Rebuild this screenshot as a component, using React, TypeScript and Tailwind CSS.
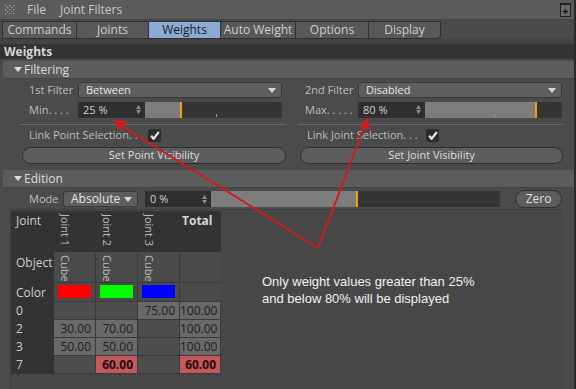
import React from "react";

const ui = "font-['Open_Sans',_'Noto_Sans',_sans-serif]";

function Grip() {
  const dots = [];
  for (let r = 0; r < 5; r++) {
    for (let c = 0; c < 5; c++) {
      if ((r + c) % 2 === 0) dots.push(<rect key={r + "-" + c} x={c * 2} y={r * 2} width="1.2" height="1.2" fill="#a8a8a8" />);
    }
  }
  return (
    <svg width="10" height="10" viewBox="0 0 10 10">
      {dots}
    </svg>
  );
}

function Dropdown({ text, className = "" }: { text: string; className?: string }) {
  return (
    <div className={"flex items-center justify-between h-[16px] rounded-[3px] bg-[#5e5e5e] border border-[#3a3a3a] pl-[7px] pr-[5px] text-[#e4e4e4] " + className}>
      <span>{text}</span>
      <svg width="8" height="5" viewBox="0 0 8 5">
        <path d="M0 0 L8 0 L4 5 Z" fill="#d8d8d8" />
      </svg>
    </div>
  );
}

function NumField({ value, w }: { value: string; w: string }) {
  return (
    <div className={"flex items-center justify-between h-[16px] bg-[#2f2f2f] pl-[5px] pr-[4px] text-[#cfcfcf] " + w}>
      <span>{value}</span>
      <svg width="5" height="9" viewBox="0 0 5 9">
        <path d="M0 4 L2.5 0 L5 4 Z M0 5 L2.5 9 L5 5 Z" fill="#8a8a8a" />
      </svg>
    </div>
  );
}

function Slider({ fill, tick, className = "" }: { fill: number; tick?: number; className?: string }) {
  return (
    <div className={"relative h-[16px] bg-[#353535] " + className}>
      <div className="h-full bg-[#7d7d7d]" style={{ width: fill + "px" }} />
      <div className="absolute top-0 h-full w-[2px] bg-[#f0a010]" style={{ left: fill + "px" }} />
      {tick !== undefined && <div className="absolute bottom-[1px] h-[3px] w-[1px] bg-[#d09020]" style={{ left: tick + "px" }} />}
    </div>
  );
}

function Check() {
  return (
    <div className="w-[13px] h-[13px] rounded-[2px] bg-[#2c2c2c] flex items-center justify-center">
      <svg width="10" height="9" viewBox="0 0 10 9">
        <path d="M1.2 4.8 L3.6 7.8 L8.8 1" stroke="#e8e8e8" strokeWidth="2.2" fill="none" />
      </svg>
    </div>
  );
}

function SectionHead({ title }: { title: string }) {
  return (
    <div className="flex items-center h-[18px] bg-[#5c5c5c] border-b border-[#444] pl-[11px] text-[#dcdcdc] text-[12px]">
      <svg width="8" height="5" viewBox="0 0 8 5" className="mr-[2px]">
        <path d="M0 0 L8 0 L4 5 Z" fill="#dcdcdc" />
      </svg>
      {title}
    </div>
  );
}

const tabs = ["Commands", "Joints", "Weights", "Auto Weight", "Options", "Display"];
const tabW = ["w-[75px]", "w-[73px]", "w-[73px]", "w-[76px]", "w-[74px]", "w-[73px]"];

const rows = [
  { label: "0", cells: ["", "", "75.00", "100.00"], red: [false, false, false, false] },
  { label: "2", cells: ["30.00", "70.00", "", "100.00"], red: [false, false, false, false] },
  { label: "3", cells: ["50.00", "50.00", "", "100.00"], red: [false, false, false, false] },
  { label: "7", cells: ["", "60.00", "", "60.00"], red: [false, true, false, true] },
];

export default function App() {
  return (
    <div className={"relative w-[576px] h-[389px] overflow-hidden bg-[#4b4b4b] text-[11px] " + ui}>
      {/* menu bar */}
      <div className="flex items-center h-[20px] bg-[#5b5b5b] border-b border-[#454545] pl-[5px] text-[#c8c8c8] text-[12px]">
        <Grip />
        <span className="ml-[12px]">File</span>
        <span className="ml-[14px]">Joint Filters</span>
        <div className="ml-auto mr-[5px] w-[11px] h-[14px] border border-[#222] border-t-2 bg-[#6a6a6a] flex items-center justify-center text-[#111] text-[11px] font-bold leading-none">
          +
        </div>
      </div>

      {/* tabs */}
      <div className="flex h-[19px] bg-[#4a4a4a] pl-[2px] pt-[1px]">
        {tabs.map((t, i) => (
          <div
            key={t}
            className={
              "flex items-center justify-center h-[18px] border border-[#2f2f2f] -ml-[1px] first:ml-0 text-[12px] " +
              tabW[i] +
              (t === "Weights" ? " bg-[#8cabd4] text-[#1e1e1e]" : " bg-[#585858] text-[#cdcdcd]") +
              (t === "Display" ? " rounded-br-[4px]" : "")
            }
          >
            {t}
          </div>
        ))}
      </div>
      <div className="h-[5px] bg-[#434343]" />

      {/* Weights header */}
      <div className="flex items-center h-[15px] bg-[#333] pl-[4px] text-[#d6d6d6] text-[12px] font-bold">Weights</div>
      <div className="h-[2px] bg-[#4b4b4b]" />

      <div className="ml-[3px]">
        <SectionHead title="Filtering" />
      </div>

      {/* filter grid */}
      <div className="grid grid-cols-[74px_204px_68px_204px] gap-x-[4px] gap-y-[3px] mt-[3px] items-center text-[#bdbdbd]">
        <div className="pl-[29px] whitespace-nowrap">1st Filter</div>
        <Dropdown text="Between" />
        <div className="pl-[19px] whitespace-nowrap">2nd Filter</div>
        <Dropdown text="Disabled" />

        <div className="pl-[29px] whitespace-nowrap">Min. . . .</div>
        <div className="flex">
          <NumField value="25 %" w="w-[67px]" />
          <Slider fill={35} tick={71} className="flex-1" />
        </div>
        <div className="pl-[19px] whitespace-nowrap">Max. . . . .</div>
        <div className="flex">
          <NumField value="80 %" w="w-[67px]" />
          <Slider fill={110} tick={69} className="flex-1" />
        </div>
      </div>

      {/* separator */}
      <div className="flex mt-[6px] h-[1px]">
        <div className="ml-[20px] w-[265px] bg-[#6a6a6a]" />
        <div className="ml-[13px] w-[265px] bg-[#6a6a6a]" />
      </div>

      <div className="flex items-center mt-[4px] h-[13px] text-[#bdbdbd]">
        <div className="pl-[29px] w-[148px] whitespace-nowrap">Link Point Selection. . .</div>
        <Check />
        <div className="pl-[146px] w-[265px] whitespace-nowrap">Link Joint Selection. . .</div>
        <Check />
      </div>

      <div className="flex mt-[5px] text-[#dedede]">
        <div className="ml-[22px] w-[264px] h-[17px] rounded-full bg-[#5d5d5d] border border-[#2e2e2e] flex items-center justify-center">
          Set Point Visibility
        </div>
        <div className="ml-[14px] w-[263px] h-[17px] rounded-full bg-[#5d5d5d] border border-[#2e2e2e] flex items-center justify-center">
          Set Joint Visibility
        </div>
      </div>

      <div className="ml-[3px] mt-[6px]">
        <SectionHead title="Edition" />
      </div>

      {/* mode row */}
      <div className="flex items-center mt-[2px] h-[18px] text-[#bdbdbd]">
        <div className="pl-[29px] w-[63px]">Mode</div>
        <Dropdown text="Absolute" className="w-[75px] text-[12px]" />
        <div className="ml-[7px] flex">
          <NumField value="0 %" w="w-[66px]" />
          <Slider fill={145} className="w-[289px]" />
        </div>
        <div className="ml-[15px] w-[47px] h-[18px] rounded-full bg-[#5d5d5d] border border-[#2e2e2e] flex items-center justify-center text-[#dedede] text-[12px]">
          Zero
        </div>
      </div>

      {/* table panel */}
      <div className="ml-[10px] mt-[1px] w-[553px] h-[182px] bg-[#474747] border-l border-t border-[#3e3e3e] pt-[1px]">
        <div className="grid grid-cols-[43px_42px_42px_42px_41px] w-[210px] text-[12px]">
          {/* header */}
          <div className="h-[41px] bg-[#333] text-[#cfcfcf] pl-[5px] pt-[1px]">Joint</div>
          {["Joint 1", "Joint 2", "Joint 3"].map((j) => (
            <div key={j} className="h-[41px] overflow-hidden bg-[#333] text-[#bdbdbd] pl-[5px] pt-[3px] text-[11px]">
              <span className="[writing-mode:vertical-rl] leading-[12px]">{j}</span>
            </div>
          ))}
          <div className="h-[41px] bg-[#333] text-[#d6d6d6] font-bold pl-[2px] pt-[1px]">Total</div>

          {/* object row */}
          <div className="h-[31px] bg-[#333] text-[#cfcfcf] pl-[5px] pt-[2px]">Object</div>
          {[0, 1, 2].map((i) => (
            <div key={i} className="h-[31px] overflow-hidden bg-[#4a4a4a] border-r border-b border-[#3a3a3a] text-[#bdbdbd] pl-[5px] pt-[3px] text-[11px]">
              <span className="[writing-mode:vertical-rl] leading-[12px]">Cube</span>
            </div>
          ))}
          <div className="h-[31px] bg-[#4a4a4a] border-b border-[#3a3a3a]" />

          {/* color row */}
          <div className="h-[19px] bg-[#333] text-[#cfcfcf] pl-[5px] leading-[19px]">Color</div>
          {["bg-[#ff0000]", "bg-[#00ff00]", "bg-[#0000ff]"].map((c) => (
            <div key={c} className="h-[19px] bg-[#4a4a4a] border-r border-b border-[#3a3a3a] pl-[4px] pt-[2px]">
              <div className={"w-[33px] h-[13px] " + c} />
            </div>
          ))}
          <div className="h-[19px] bg-[#4a4a4a] border-b border-[#3a3a3a]" />

          {rows.map((r) => (
            <React.Fragment key={r.label}>
              <div className="h-[18px] bg-[#333] text-[#cfcfcf] pl-[5px] leading-[18px]">{r.label}</div>
              {r.cells.map((v, i) => (
                <div
                  key={i}
                  className={
                    "h-[18px] border-r border-b border-[#3a3a3a] text-right pr-[4px] leading-[17px] " +
                    (r.red[i]
                      ? "bg-[#c4595c] text-[#2a0a0a] font-bold"
                      : v
                      ? "bg-[#696969] text-[#1e1e1e]"
                      : "bg-[#4d4d4d]")
                  }
                >
                  {v}
                </div>
              ))}
            </React.Fragment>
          ))}
        </div>
      </div>

      {/* right window edge */}
      <div className="absolute top-0 right-0 w-[2px] h-full bg-[#2a2a2a]" />

      {/* annotation */}
      <div className="absolute left-[262px] top-[273px] text-[13px] leading-[17px] text-[#f2f2f2] font-['Liberation_Sans',_Arial,_sans-serif]">
        Only weight values greater than 25%
        <br />
        and below 80% will be displayed
      </div>
      <svg className="absolute inset-0 pointer-events-none" width="576" height="389" viewBox="0 0 576 389">
        <path d="M318 248 L122 126" stroke="#d41a1a" strokeWidth="2" fill="none" />
        <path d="M318 248 L365 125" stroke="#d41a1a" strokeWidth="2" fill="none" />
        <path d="M113 120 L127 121 L121 131 Z" fill="#d41a1a" />
        <path d="M368 117 L370 130 L360 127 Z" fill="#d41a1a" />
      </svg>
    </div>
  );
}
